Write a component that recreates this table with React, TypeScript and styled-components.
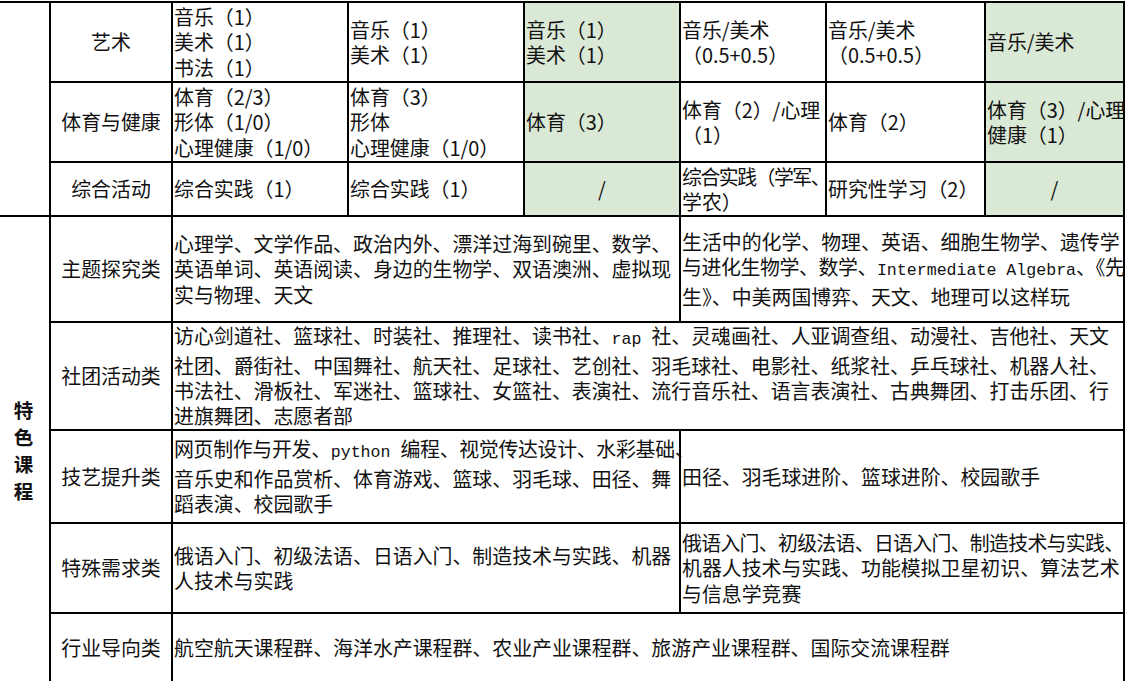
import React from 'react';
import styled, { createGlobalStyle } from 'styled-components';

const GlobalStyle = createGlobalStyle`
  html, body {
    margin: 0;
    padding: 0;
    background: #ffffff;
    overflow: hidden;
  }
  body {
    font-family: "Noto Sans CJK SC", "Noto Sans", sans-serif;
    color: #111;
  }
`;

const Sheet = styled.div`
  display: grid;
  grid-template-columns: 51px 122px 176px 176px 156px 146px 159px 139px;
  grid-template-rows: 80px 80px 54px 106px 108px 93px 90px 70px;
  width: 1125px;
  margin-top: 1px;
  border-top: 2px solid #000;
  font-size: 19.9px;
`;

const Cell = styled.div<{ $cols?: number; $rows?: number; $center?: boolean; $shade?: boolean }>`
  grid-column: span ${(p) => p.$cols ?? 1};
  grid-row: span ${(p) => p.$rows ?? 1};
  display: flex;
  flex-direction: column;
  justify-content: center;
  align-items: ${(p) => (p.$center ? 'center' : 'flex-start')};
  box-sizing: border-box;
  padding-left: ${(p) => (p.$center ? '0' : '1px')};
  border-right: 2px solid #000;
  border-bottom: 2px solid #000;
  background: ${(p) => (p.$shade ? '#dae8d6' : 'transparent')};
  min-width: 0;
`;

const Line = styled.div<{ $tight?: number }>`
  white-space: nowrap;
  line-height: 25.4px;
  letter-spacing: ${(p) => (p.$tight ? `-${p.$tight}px` : 'normal')};
`;

const Latin = styled.span`
  font-family: "Liberation Mono", monospace;
  font-size: 16.6px;
  letter-spacing: 0;
`;

const Title = styled.div`
  display: flex;
  flex-direction: column;
  align-items: center;
  font-weight: 700;
  font-size: 19.5px;
  line-height: 27px;
  padding-right: 2px;
`;

type Item = {
  lines: string[];
  shade?: boolean;
  center?: boolean;
  cols?: number;
  tight?: Record<number, number>;
};

// latin runs get the narrow monospace face, like the sheet's half-width glyphs
const LATIN = /(python |rap |Intermediate Algebra)/;
const renderText = (text: string) =>
  text.split(LATIN).map((part, i) => (LATIN.test(part) ? <Latin key={i}>{part}</Latin> : part));

const Block: React.FC<{ item: Item }> = ({ item }) => (
  <Cell $cols={item.cols} $center={item.center} $shade={item.shade}>
    {item.lines.map((l, i) => (
      <Line key={i} $tight={item.tight?.[i]}>
        {renderText(l)}
      </Line>
    ))}
  </Cell>
);

const upperRows: { label: string; cells: Item[] }[] = [
  {
    label: '艺术',
    cells: [
      { lines: ['音乐（1）', '美术（1）', '书法（1）'] },
      { lines: ['音乐（1）', '美术（1）'] },
      { lines: ['音乐（1）', '美术（1）'], shade: true },
      { lines: ['音乐/美术', '（0.5+0.5）'] },
      { lines: ['音乐/美术', '（0.5+0.5）'] },
      { lines: ['音乐/美术'], shade: true },
    ],
  },
  {
    label: '体育与健康',
    cells: [
      { lines: ['体育（2/3）', '形体（1/0）', '心理健康（1/0）'] },
      { lines: ['体育（3）', '形体', '心理健康（1/0）'] },
      { lines: ['体育（3）'], shade: true },
      { lines: ['体育（2）/心理', '（1）'] },
      { lines: ['体育（2）'] },
      { lines: ['体育（3）/心理', '健康（1）'], shade: true },
    ],
  },
  {
    label: '综合活动',
    cells: [
      { lines: ['综合实践（1）'] },
      { lines: ['综合实践（1）'] },
      { lines: ['/'], shade: true, center: true },
      { lines: ['综合实践（学军、', '学农）'], tight: { 0: 1.5 } },
      { lines: ['研究性学习（2）'] },
      { lines: ['/'], shade: true, center: true },
    ],
  },
];

const lowerRows: { label: string; cells: Item[] }[] = [
  {
    label: '主题探究类',
    cells: [
      {
        cols: 3,
        lines: [
          '心理学、文学作品、政治内外、漂洋过海到碗里、数学、',
          '英语单词、英语阅读、身边的生物学、双语澳洲、虚拟现',
          '实与物理、天文',
        ],
      },
      {
        cols: 3,
        tight: { 1: 0.4 },
        lines: [
          '生活中的化学、物理、英语、细胞生物学、遗传学',
          '与进化生物学、数学、Intermediate Algebra、《先',
          '生》、中美两国博弈、天文、地理可以这样玩',
        ],
      },
    ],
  },
  {
    label: '社团活动类',
    cells: [
      {
        cols: 6,
        lines: [
          '访心剑道社、篮球社、时装社、推理社、读书社、rap 社、灵魂画社、人亚调查组、动漫社、吉他社、天文',
          '社团、爵街社、中国舞社、航天社、足球社、艺创社、羽毛球社、电影社、纸浆社、乒乓球社、机器人社、',
          '书法社、滑板社、军迷社、篮球社、女篮社、表演社、流行音乐社、语言表演社、古典舞团、打击乐团、行',
          '进旗舞团、志愿者部',
        ],
      },
    ],
  },
  {
    label: '技艺提升类',
    cells: [
      {
        cols: 3,
        tight: { 0: 0.3 },
        lines: [
          '网页制作与开发、python 编程、视觉传达设计、水彩基础、',
          '音乐史和作品赏析、体育游戏、篮球、羽毛球、田径、舞',
          '蹈表演、校园歌手',
        ],
      },
      { cols: 3, lines: ['田径、羽毛球进阶、篮球进阶、校园歌手'] },
    ],
  },
  {
    label: '特殊需求类',
    cells: [
      {
        cols: 3,
        lines: ['俄语入门、初级法语、日语入门、制造技术与实践、机器', '人技术与实践'],
      },
      {
        cols: 3,
        tight: { 0: 0.7 },
        lines: [
          '俄语入门、初级法语、日语入门、制造技术与实践、',
          '机器人技术与实践、功能模拟卫星初识、算法艺术',
          '与信息学竞赛',
        ],
      },
    ],
  },
  {
    label: '行业导向类',
    cells: [
      {
        cols: 6,
        lines: ['航空航天课程群、海洋水产课程群、农业产业课程群、旅游产业课程群、国际交流课程群'],
      },
    ],
  },
];

const App: React.FC = () => {
  return (
    <>
      <GlobalStyle />
      <Sheet>
        <Cell $rows={3} />
        {upperRows.map((row) => (
          <React.Fragment key={row.label}>
            <Cell $center>
              <Line>{row.label}</Line>
            </Cell>
            {row.cells.map((c, i) => (
              <Block key={i} item={c} />
            ))}
          </React.Fragment>
        ))}

        <Cell $rows={5} $center>
          <Title>
            {'特色课程'.split('').map((ch) => (
              <span key={ch}>{ch}</span>
            ))}
          </Title>
        </Cell>
        {lowerRows.map((row) => (
          <React.Fragment key={row.label}>
            <Cell $center>
              <Line>{row.label}</Line>
            </Cell>
            {row.cells.map((c, i) => (
              <Block key={i} item={c} />
            ))}
          </React.Fragment>
        ))}
      </Sheet>
    </>
  );
};

export default App;
